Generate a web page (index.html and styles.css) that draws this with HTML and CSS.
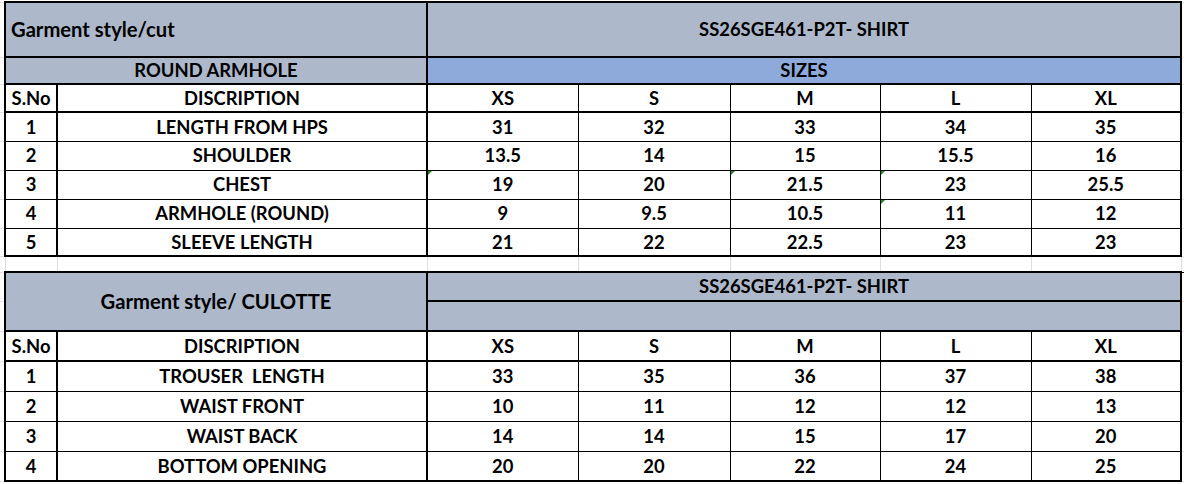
FILE: index.html
```html
<!DOCTYPE html>
<html>
<head>
<meta charset="utf-8">
<title>Size chart</title>
<link rel="stylesheet" href="styles.css">
</head>
<body>
<table class="sheet">
  <colgroup>
    <col class="c-pad">
    <col class="c-no">
    <col class="c-desc">
    <col class="c-xs">
    <col class="c-s">
    <col class="c-m">
    <col class="c-l">
    <col class="c-xl">
    <col class="c-pad2">
  </colgroup>
  <tr class="r-title">
    <td class="pad"></td>
    <td colspan="2" class="hdr left title">Garment style/cut</td>
    <td colspan="5" class="hdr">SS26SGE461-P2T- SHIRT</td>
    <td class="pad"></td>
  </tr>
  <tr class="r-sub">
    <td class="pad"></td>
    <td colspan="2" class="hdr">ROUND ARMHOLE</td>
    <td colspan="5" class="hdr sizes">SIZES</td>
    <td class="pad"></td>
  </tr>
  <tr class="r-head h-a">
    <td class="pad"></td>
    <td class="no">S.No</td><td class="desc">DISCRIPTION</td>
    <td>XS</td><td>S</td><td>M</td><td>L</td><td class="xl">XL</td>
    <td class="pad"></td>
  </tr>
  <tr class="h-b">
    <td class="pad"></td>
    <td class="no">1</td><td class="desc">LENGTH FROM HPS</td>
    <td>31</td><td>32</td><td>33</td><td>34</td><td class="xl">35</td>
    <td class="pad"></td>
  </tr>
  <tr class="h-c">
    <td class="pad"></td>
    <td class="no">2</td><td class="desc">SHOULDER</td>
    <td>13.5</td><td>14</td><td>15</td><td>15.5</td><td class="xl">16</td>
    <td class="pad"></td>
  </tr>
  <tr class="h-c">
    <td class="pad"></td>
    <td class="no">3</td><td class="desc">CHEST</td>
    <td class="flag">19</td><td>20</td><td class="flag">21.5</td><td class="flag">23</td><td class="xl">25.5</td>
    <td class="pad"></td>
  </tr>
  <tr class="h-c">
    <td class="pad"></td>
    <td class="no">4</td><td class="desc">ARMHOLE (ROUND)</td>
    <td>9</td><td>9.5</td><td>10.5</td><td class="flag">11</td><td class="xl">12</td>
    <td class="pad"></td>
  </tr>
  <tr class="h-d last">
    <td class="pad"></td>
    <td class="no">5</td><td class="desc">SLEEVE LENGTH</td>
    <td>21</td><td>22</td><td>22.5</td><td>23</td><td class="xl">23</td>
    <td class="pad"></td>
  </tr>
  <tr class="r-gap">
    <td class="pad"></td>
    <td class="gap"></td><td class="gap"></td><td class="gap"></td><td class="gap"></td>
    <td class="gap"></td><td class="gap"></td><td class="gap"></td><td class="gap"></td>
    <td class="pad"></td>
  </tr>
  <tr class="h-e">
    <td class="pad"></td>
    <td colspan="2" rowspan="2" class="hdr title">Garment style/ CULOTTE</td>
    <td colspan="5" class="hdr">SS26SGE461-P2T- SHIRT</td>
    <td class="pad"></td>
  </tr>
  <tr class="h-f">
    <td class="pad"></td>
    <td colspan="5" class="hdr"></td>
    <td class="pad"></td>
  </tr>
  <tr class="r-head h-f">
    <td class="pad"></td>
    <td class="no">S.No</td><td class="desc">DISCRIPTION</td>
    <td>XS</td><td>S</td><td>M</td><td>L</td><td class="xl">XL</td>
    <td class="pad"></td>
  </tr>
  <tr class="h-g">
    <td class="pad"></td>
    <td class="no">1</td><td class="desc">TROUSER&nbsp; LENGTH</td>
    <td>33</td><td>35</td><td>36</td><td>37</td><td class="xl">38</td>
    <td class="pad"></td>
  </tr>
  <tr class="h-h">
    <td class="pad"></td>
    <td class="no">2</td><td class="desc">WAIST FRONT</td>
    <td>10</td><td>11</td><td>12</td><td>12</td><td class="xl">13</td>
    <td class="pad"></td>
  </tr>
  <tr class="h-h">
    <td class="pad"></td>
    <td class="no">3</td><td class="desc">WAIST BACK</td>
    <td>14</td><td>14</td><td>15</td><td>17</td><td class="xl">20</td>
    <td class="pad"></td>
  </tr>
  <tr class="h-g last">
    <td class="pad"></td>
    <td class="no">4</td><td class="desc">BOTTOM OPENING</td>
    <td>20</td><td>20</td><td>22</td><td>24</td><td class="xl">25</td>
    <td class="pad"></td>
  </tr>
</table>
</body>
</html>
```

FILE: styles.css
```css
html, body {
  margin: 0;
  padding: 0;
  background: #ffffff;
}

.sheet {
  border-collapse: collapse;
  table-layout: fixed;
  width: 1184px;
  margin-top: 1px;
  font-family: Lato, "Liberation Sans", sans-serif;
  font-weight: 700;
  font-size: 18.4px;
  color: #000000;
}

.c-pad { width: 5px; }
.c-no { width: 52px; }
.c-desc { width: 370px; }
.c-xs { width: 151px; }
.c-s { width: 152px; }
.c-m { width: 150px; }
.c-l { width: 151px; }
.c-xl { width: 150px; }
.c-pad2 { width: 3px; }

.sheet td {
  border: 1px solid #000000;
  padding: 0;
  text-align: center;
  vertical-align: middle;
  white-space: nowrap;
  overflow: hidden;
  line-height: 1;
}

.sheet td.pad {
  border-left: none;
  border-right: none;
  border-top: 1px solid #e2e2e2;
  border-bottom: 1px solid #e2e2e2;
}

.sheet td.hdr {
  border: 2px solid #000000;
  background: #adb9ca;
}

.sheet td.sizes {
  background: #8eaadb;
}

.sheet td.title {
  font-size: 20.2px;
}

.sheet td.left {
  text-align: left;
  padding-left: 5px;
}

.sheet td.no {
  border-left: 2px solid #000000;
  border-right: 2px solid #000000;
}

.sheet td.desc {
  border-right: 2px solid #000000;
}

.sheet td.xl {
  border-right: 2px solid #000000;
}

.r-head td {
  border-top: 2px solid #000000;
  border-bottom: 2px solid #000000;
}

.last td {
  border-bottom: 2px solid #000000;
}

.sheet td.gap {
  border-left: 1px solid #dcdcdc;
  border-right: 1px solid #dcdcdc;
}

.r-title td { height: 53px; }
.r-sub td { height: 25px; }
.h-a td { height: 26px; }
.h-b td { height: 27.5px; }
.h-c td { height: 28px; }
.h-d td { height: 26.5px; }
.r-gap td { height: 14px; }
.h-e td { height: 27px; }
.h-f td { height: 28px; }
.h-g td { height: 28.5px; }
.h-h td { height: 29px; }

.sheet td.flag {
  position: relative;
}

.sheet td.flag::before {
  content: "";
  position: absolute;
  top: 0;
  left: 0;
  border-top: 4px solid #1f8a1f;
  border-right: 4px solid transparent;
}
```
